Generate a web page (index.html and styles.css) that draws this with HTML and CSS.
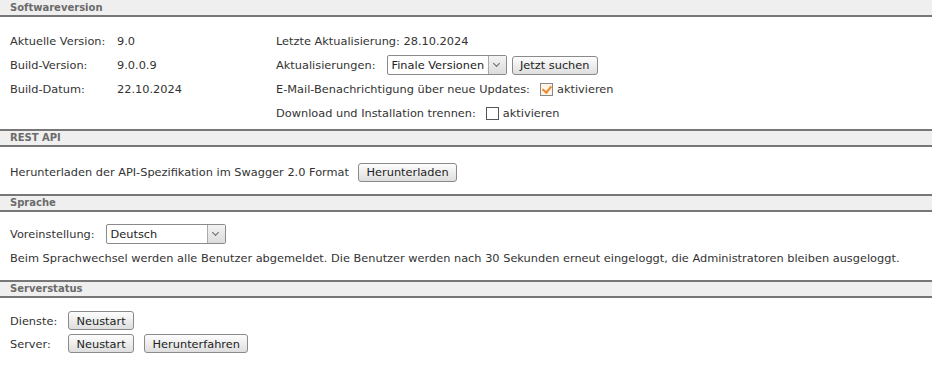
FILE: index.html
```html
<!DOCTYPE html>
<html lang="de">
<head>
    <meta charset="UTF-8">
    <title>Systemeinstellungen</title>
    <link rel="stylesheet" href="styles.css">
</head>
<body>
    <div class="section-head first">Softwareversion</div>
    <div class="section version">
        <div class="info">
            <span>Aktuelle Version:</span><span>9.0</span>
            <span>Build-Version:</span><span>9.0.0.9</span>
            <span>Build-Datum:</span><span>22.10.2024</span>
        </div>
        <div class="updates">
            <div class="row">Letzte Aktualisierung: 28.10.2024</div>
            <div class="row">
                <span>Aktualisierungen:</span>
                <div class="select"><span>Finale Versionen</span><i class="arrow"></i></div>
                <button class="btn">Jetzt suchen</button>
            </div>
            <div class="row">
                <span>E-Mail-Benachrichtigung über neue Updates:</span>
                <label class="check"><i class="box checked"></i>aktivieren</label>
            </div>
            <div class="row">
                <span>Download und Installation trennen:</span>
                <label class="check"><i class="box"></i>aktivieren</label>
            </div>
        </div>
    </div>

    <div class="section-head">REST API</div>
    <div class="section api">
        <div class="row">
            <span>Herunterladen der API-Spezifikation im Swagger 2.0 Format</span>
            <button class="btn">Herunterladen</button>
        </div>
    </div>

    <div class="section-head">Sprache</div>
    <div class="section lang">
        <div class="row">
            <span>Voreinstellung:</span>
            <div class="select"><span>Deutsch</span><i class="arrow"></i></div>
        </div>
        <div class="row">Beim Sprachwechsel werden alle Benutzer abgemeldet. Die Benutzer werden nach 30 Sekunden erneut eingeloggt, die Administratoren bleiben ausgeloggt.</div>
    </div>

    <div class="section-head">Serverstatus</div>
    <div class="section server">
        <div class="row">
            <span class="lbl">Dienste:</span>
            <button class="btn">Neustart</button>
        </div>
        <div class="row">
            <span class="lbl">Server:</span>
            <button class="btn">Neustart</button>
            <button class="btn spaced">Herunterfahren</button>
        </div>
    </div>
</body>
</html>
```

FILE: styles.css
```css
body {
    margin: 0;
    width: 932px;
    font-family: 'DejaVu Sans', Verdana, sans-serif;
    font-size: 11.35px;
    color: #333;
    background: white;
}
.section-head {
    background: #efefef;
    color: #6b6b6b;
    font-weight: bold;
    font-size: 10px;
    height: 14px;
    line-height: 14px;
    padding-left: 10px;
    border-top: 2px solid #777;
    border-bottom: 2px solid #777;
}
.section-head.first {
    height: 15px;
    line-height: 16px;
    border-top: none;
}
.section {
    padding: 0 10px;
}
.row {
    display: flex;
    align-items: center;
    gap: 5px;
    height: 24px;
}
.version {
    display: flex;
    padding-top: 12px;
    padding-bottom: 4px;
}
.info {
    display: grid;
    grid-template-columns: 107px auto;
    grid-auto-rows: 24px;
    align-items: center;
    width: 266px;
}
.api {
    padding-top: 13px;
    padding-bottom: 10px;
}
.api .btn {
    margin-left: 4px;
}
.lang {
    padding-top: 10px;
    padding-bottom: 10px;
}
.server {
    padding-top: 11px;
    padding-bottom: 10px;
}
.server .row {
    height: 23px;
}
.server .lbl {
    width: 53px;
}
.server .spaced {
    margin-left: 5px;
}
.btn {
    font-family: inherit;
    font-size: 11.35px;
    color: #222;
    height: 19px;
    padding: 0 7.5px;
    border: 1px solid #8a8a8a;
    border-radius: 3px;
    background: linear-gradient(#fdfdfd, #dedede);
}
.select {
    display: flex;
    align-items: center;
    border: 1px solid #8a8a8a;
    border-radius: 2px;
    background: white;
    width: 120px;
    box-sizing: border-box;
    height: 20px;
    margin-left: 6px;
}
.select span {
    flex: 1;
    padding-left: 4px;
    color: #222;
}
.arrow {
    width: 17px;
    height: 18px;
    border-left: 1px solid #aaa;
    background: linear-gradient(#f3f3f3, #dcdcdc);
    position: relative;
}
.arrow::after {
    content: '';
    position: absolute;
    left: 5px;
    top: 5px;
    width: 4px;
    height: 4px;
    border-right: 1px solid #666;
    border-bottom: 1px solid #666;
    transform: rotate(45deg);
}
.check {
    display: flex;
    align-items: center;
    gap: 4px;
    margin-left: 5px;
}
.box {
    width: 11px;
    height: 11px;
    border: 1px solid #555;
    background: white;
    position: relative;
}
.box.checked {
    border-color: #888;
    background: #fdf3e6;
}
.box.checked::after {
    content: '';
    position: absolute;
    left: 3px;
    top: 0;
    width: 4px;
    height: 7px;
    border-right: 2px solid #e8892b;
    border-bottom: 2px solid #e8892b;
    transform: rotate(40deg);
}
```
